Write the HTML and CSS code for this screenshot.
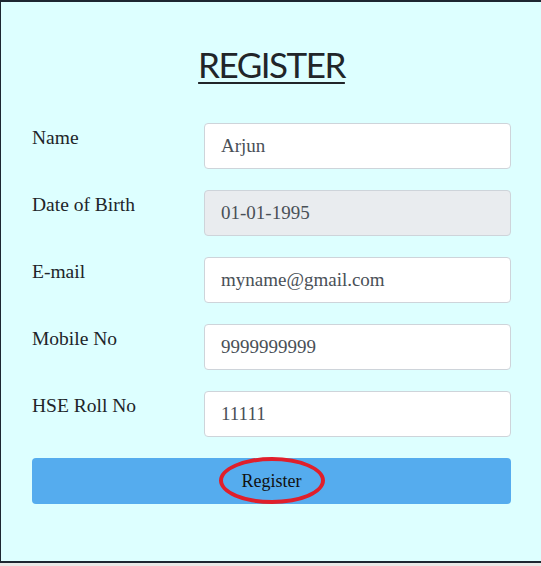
FILE: index.html
```html
<!DOCTYPE html>
<html lang="en">
<head>
  <meta charset="UTF-8">
  <title>Register</title>
  <link rel="stylesheet" href="styles.css">
</head>
<body>
  <div class="frame">
    <h1 class="title">REGISTER</h1>

    <form class="form">
      <div class="row">
        <label for="name">Name</label>
        <input type="text" id="name" value="Arjun">
      </div>
      <div class="row">
        <label for="dob">Date of Birth</label>
        <input type="text" id="dob" value="01-01-1995" disabled>
      </div>
      <div class="row">
        <label for="email">E-mail</label>
        <input type="text" id="email" value="myname@gmail.com">
      </div>
      <div class="row">
        <label for="mobile">Mobile No</label>
        <input type="text" id="mobile" value="9999999999">
      </div>
      <div class="row">
        <label for="roll">HSE Roll No</label>
        <input type="text" id="roll" value="11111">
      </div>

      <button type="button" class="submit">
        Register
        <span class="mark"></span>
      </button>
    </form>
  </div>
</body>
</html>
```

FILE: styles.css
```css
body {
  margin: 0;
  background: #e9e8e6;
  font-family: "Liberation Serif", "Times New Roman", serif;
  color: #212529;
}

.frame {
  background: #ddffff;
  border-top: 2px solid #1d2731;
  border-left: 1px solid #1d2731;
  border-bottom: 2px solid #1d2731;
  padding: 41px 30px 57px 31px;
}

.title {
  margin: 0 0 38px;
  text-align: center;
  font-family: Lato, "Open Sans", sans-serif;
  font-weight: 400;
  font-size: 35px;
  letter-spacing: -1.5px;
  line-height: 1.2;
  text-decoration: underline;
  text-decoration-thickness: 2px;
  text-underline-offset: 4px;
  color: #212529;
}

.form {
  display: flex;
  flex-direction: column;
  gap: 21px;
}

.row {
  display: grid;
  grid-template-columns: 172px 1fr;
}

.row label {
  font-size: 19.5px;
  padding-top: 4px;
}

.row input {
  height: 46px;
  box-sizing: border-box;
  padding: 0 16px;
  border: 1px solid #ced4da;
  border-radius: 4px;
  background: #fff;
  font-family: "Liberation Serif", "Times New Roman", serif;
  font-size: 19px;
  color: #495057;
}

.row input:disabled {
  background: #e9ecef;
}

.submit {
  position: relative;
  height: 46px;
  border: none;
  border-radius: 4px;
  background: #55acee;
  font-family: "Liberation Serif", "Times New Roman", serif;
  font-size: 18px;
  color: #111;
}

.mark {
  position: absolute;
  left: 50%;
  top: 50%;
  width: 106px;
  height: 47px;
  box-sizing: border-box;
  border: 4px solid #e01f2b;
  border-radius: 50%;
  transform: translate(-50%, -51%);
}
```
